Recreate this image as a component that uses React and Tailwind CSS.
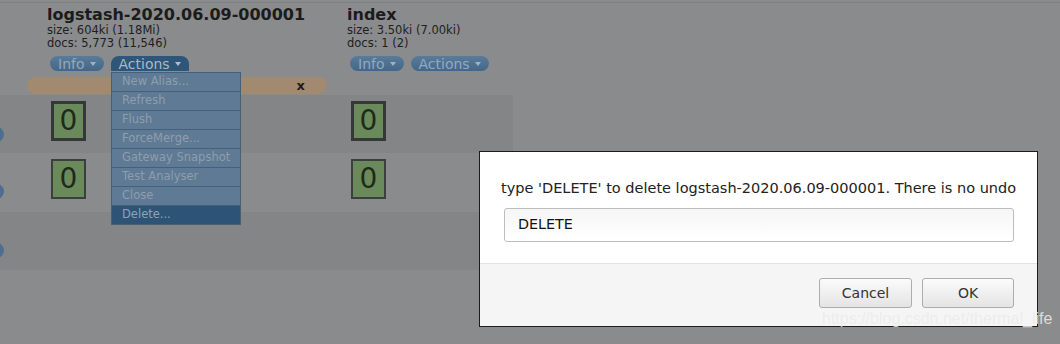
import React from "react";

const dv = "font-['DejaVu_Sans',_'Noto_Sans',_sans-serif]";

function Caret({ color }) {
  return (
    <span
      className={`w-0 h-0 border-l-[3.5px] border-r-[3.5px] border-t-[4px] border-l-transparent border-r-transparent ${color}`}
    />
  );
}

function IndexHeader({ name, size, docs, open }) {
  return (
    <div className="w-[300px] pl-[20px]">
      <div className="text-[16px] leading-[19px] font-bold text-[#1b1b1b]">{name}</div>
      <div className="text-[11.5px] leading-[13px] text-[#1e1e1e]">size: {size}</div>
      <div className="text-[11.5px] leading-[13px] text-[#1e1e1e]">docs: {docs}</div>
      <div className="mt-[6px] ml-[3px] flex items-start gap-[7px]">
        <div className="h-[15px] px-[8px] rounded-full bg-gradient-to-b from-[#5a7c9a] to-[#43678a] flex items-center gap-[5px] text-[14px] leading-none text-[#93a9bd]">
          Info
          <Caret color="border-t-[#9fb3c5]" />
        </div>
        {open ? (
          <div className="h-[15px] px-[8px] rounded-t-[8px] bg-[#2e5679] flex items-center gap-[5px] text-[14px] leading-none text-[#a9b9c8]">
            Actions
            <Caret color="border-t-[#b0bfcc]" />
          </div>
        ) : (
          <div className="h-[15px] px-[8px] rounded-full bg-gradient-to-b from-[#5a7c9a] to-[#43678a] flex items-center gap-[5px] text-[14px] leading-none text-[#93a9bd]">
            Actions
            <Caret color="border-t-[#9fb3c5]" />
          </div>
        )}
      </div>
    </div>
  );
}

function Shard({ primary }) {
  return (
    <div
      className={`w-[35px] h-[40px] bg-[#6b8a5c] flex items-center justify-center text-[28px] leading-none text-[#1e2a1a] ${
        primary ? "border-[3px] border-[#363738]" : "border-2 border-[#3d3e3e]"
      }`}
    >
      0
    </div>
  );
}

function Row({ dark, height, circleTop, shards }) {
  return (
    <div className={`flex ${height} ${dark ? "bg-[#848586]" : ""}`}>
      <div className="w-[27px]">
        <div className={`w-[15px] h-[15px] rounded-full bg-[#4d6e8e] ml-[-11px] ${circleTop}`} />
      </div>
      {shards.map((s, i) => (
        <div key={i} className={`${i === 0 ? "w-[300px]" : "flex-1"} pl-[24px] pt-[6px]`}>
          {s && <Shard primary={s === "p"} />}
        </div>
      ))}
    </div>
  );
}

const menuItems = [
  "New Alias...",
  "Refresh",
  "Flush",
  "ForceMerge...",
  "Gateway Snapshot",
  "Test Analyser",
  "Close",
  "Delete...",
];

export default function App() {
  return (
    <div className={`relative w-[1060px] h-[344px] overflow-hidden bg-[#8a8b8c] ${dv}`}>
      <div className="h-[2px]" />
      <div className="h-px bg-[#7f8081]" />
      <div className="pt-[2px] pl-[27px] flex">
        <IndexHeader name="logstash-2020.06.09-000001" size="604ki (1.18Mi)" docs="5,773 (11,546)" open />
        <IndexHeader name="index" size="3.50ki (7.00ki)" docs="1 (2)" />
      </div>

      <div className="mt-[6px] ml-[27px] w-[300px] h-[17px] rounded-full bg-[#a28a70] flex items-center justify-end pr-[22px]">
        <span className="text-[13px] font-bold leading-none text-[#1c1c1c]">x</span>
      </div>

      <div className="mt-[1px] w-[513px]">
        <Row dark height="h-[58px]" circleTop="mt-[32px]" shards={["p", "p"]} />
        <Row height="h-[59px]" circleTop="mt-[31px]" shards={["r", "r"]} />
        <Row dark height="h-[58px]" circleTop="mt-[31px]" shards={[null, null]} />
      </div>

      {/* Actions dropdown */}
      <div className="absolute left-[111px] top-[72px] w-[130px] bg-[#46607c] p-px flex flex-col gap-px">
        {menuItems.map((item) => (
          <div
            key={item}
            className={`h-[18px] pl-[10px] flex items-center text-[11.5px] leading-none ${
              item === "Delete..." ? "bg-[#2d5477] text-[#8fa2b3]" : "bg-[#5f7a94] text-[#8e9eac]"
            }`}
          >
            {item}
          </div>
        ))}
      </div>

      {/* Confirm dialog */}
      <div className="absolute left-[479px] top-[151px] w-[559px] h-[176px] border border-[#1c1c1c] bg-white flex flex-col">
        <div className="h-[111px] pt-[27px] pl-[21px] pr-[20px]">
          <div className="text-[14.5px] leading-[18px] whitespace-nowrap text-[#222]">
            type 'DELETE' to delete logstash-2020.06.09-000001. There is no undo
          </div>
          <div className="mt-[11px] ml-[3px] h-[34px] w-[510px] rounded-[3px] border border-[#bdbdbd] bg-gradient-to-b from-[#f6f6f6] to-white flex items-center pl-[13px] text-[14.3px] text-[#111]">
            DELETE
          </div>
        </div>
        <div className="flex-1 border-t border-[#e3e3e3] bg-[#f5f5f5] flex justify-end items-start gap-[10px] pt-[14px] pr-[23px]">
          <button className="w-[93px] h-[30px] rounded-[3px] border border-[#adadad] bg-gradient-to-b from-[#fbfbfb] to-[#e4e4e4] text-[14px] text-[#333]">
            Cancel
          </button>
          <button className="w-[92px] h-[30px] rounded-[3px] border border-[#adadad] bg-gradient-to-b from-[#fbfbfb] to-[#e4e4e4] text-[14px] text-[#333]">
            OK
          </button>
        </div>
      </div>

      <div className="absolute left-[822px] top-[309px] font-['Liberation_Sans',_Arial,_sans-serif] text-[16px] leading-[20px] text-[#ebebeb]/85">
        https://blog.csdn.net/thermal_life
      </div>
    </div>
  );
}
